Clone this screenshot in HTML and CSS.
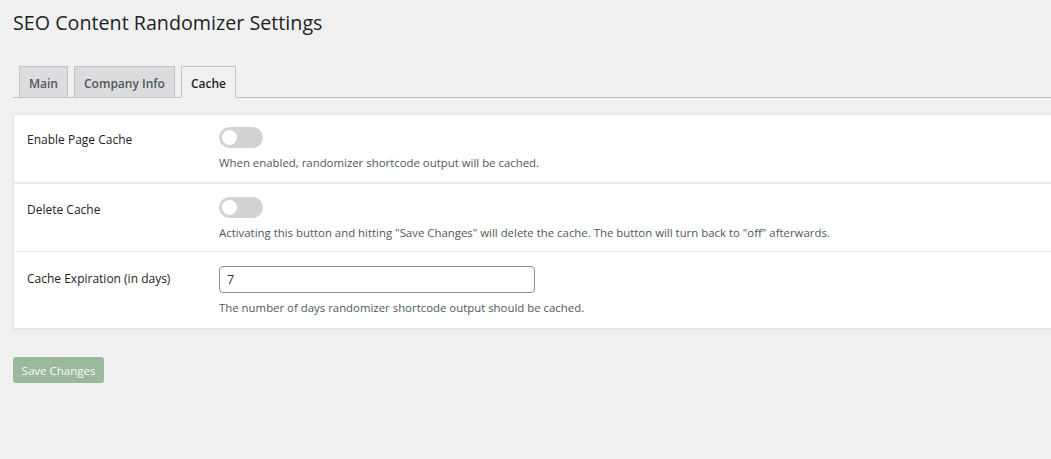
FILE: index.html
```html
<!DOCTYPE html>
<html>
<head>
<meta charset="utf-8">
<link rel="stylesheet" href="styles.css">
</head>
<body>
<div class="wrap">
  <h1 class="title">SEO Content Randomizer Settings</h1>
  <nav class="tabs">
    <a class="tab">Main</a>
    <a class="tab">Company Info</a>
    <a class="tab active">Cache</a>
  </nav>
  <div class="card">
    <div class="row row-first">
      <div class="label">Enable Page Cache</div>
      <div class="field">
        <span class="toggle"><span class="knob"></span></span>
        <p class="desc">When enabled, randomizer shortcode output will be cached.</p>
      </div>
    </div>
    <div class="row row-mid">
      <div class="label">Delete Cache</div>
      <div class="field">
        <span class="toggle"><span class="knob"></span></span>
        <p class="desc">Activating this button and hitting "Save Changes" will delete the cache. The button will turn back to "off" afterwards.</p>
      </div>
    </div>
    <div class="row row-last">
      <div class="label">Cache Expiration (in days)</div>
      <div class="field">
        <input class="input" type="text" value="7">
        <p class="desc">The number of days randomizer shortcode output should be cached.</p>
      </div>
    </div>
  </div>
  <button class="save">Save Changes</button>
</div>
</body>
</html>
```

FILE: styles.css
```css
html, body {
  margin: 0;
  padding: 0;
  background: #f0f0f1;
  font-family: "Open Sans", "Noto Sans", sans-serif;
  color: #1d2327;
}
.wrap {
  padding: 0 0 0 13px;
  overflow: hidden;
}
.title {
  margin: 0;
  padding: 9px 0 0 0;
  font-size: 19.7px;
  font-weight: 400;
  line-height: 28px;
  color: #1d2327;
}
.tabs {
  display: flex;
  gap: 6px;
  margin-top: 29px;
  padding-left: 6px;
  border-bottom: 1px solid #c3c4c7;
  height: 31px;
}
.tab {
  display: flex;
  align-items: center;
  padding: 2px 9px 0 9px;
  font-size: 12px;
  font-weight: 600;
  color: #50575e;
  background: #dcdcde;
  border: 1px solid #c3c4c7;
  border-bottom: none;
  box-sizing: border-box;
  height: 31px;
}
.tab.active {
  background: #f0f0f1;
  color: #1d2327;
  border-bottom: 1px solid #f0f0f1;
  height: 32px;
}
.card {
  margin-top: 16px;
  margin-right: -20px;
  background: #fff;
  border: 1px solid #e4e4e6;
  box-shadow: 0 1px 1px rgba(0,0,0,0.04);
}
.row {
  display: flex;
  padding: 12px 0 0 13px;
  box-sizing: border-box;
}
.row-first {
  height: 67px;
}
.row-mid {
  border-top: 2px solid #ececec;
  height: 69px;
  padding-top: 13px;
}
.row-last {
  border-top: 1px solid #ececec;
  height: 77px;
  padding-top: 14px;
}
.label {
  width: 192px;
  flex-shrink: 0;
  font-size: 12px;
  line-height: 26px;
  color: #1d2327;
}
.field {
  display: flex;
  flex-direction: column;
  align-items: flex-start;
}
.toggle {
  position: relative;
  display: block;
  width: 44px;
  height: 21px;
  border-radius: 11px;
  background: #d3d3d3;
}
.knob {
  position: absolute;
  left: 3px;
  top: 3px;
  width: 15px;
  height: 15px;
  border-radius: 50%;
  background: #fff;
}
.desc {
  margin: 7px 0 0 0;
  font-size: 11.4px;
  line-height: 16px;
  color: #50575e;
}
.input {
  width: 316px;
  height: 27px;
  box-sizing: border-box;
  border: 1px solid #8c8f94;
  border-radius: 4px;
  padding: 0 7px;
  font-family: inherit;
  font-size: 12.5px;
  color: #2c3338;
  background: #fff;
  margin: 0;
}
.row-last .desc {
  margin-top: 7px;
}
.save {
  margin-top: 28px;
  width: 91px;
  height: 26px;
  border: none;
  border-radius: 3px;
  background: #9bb89c;
  color: #f6fbf6;
  font-family: inherit;
  font-size: 11.5px;
  padding: 0;
}
```
